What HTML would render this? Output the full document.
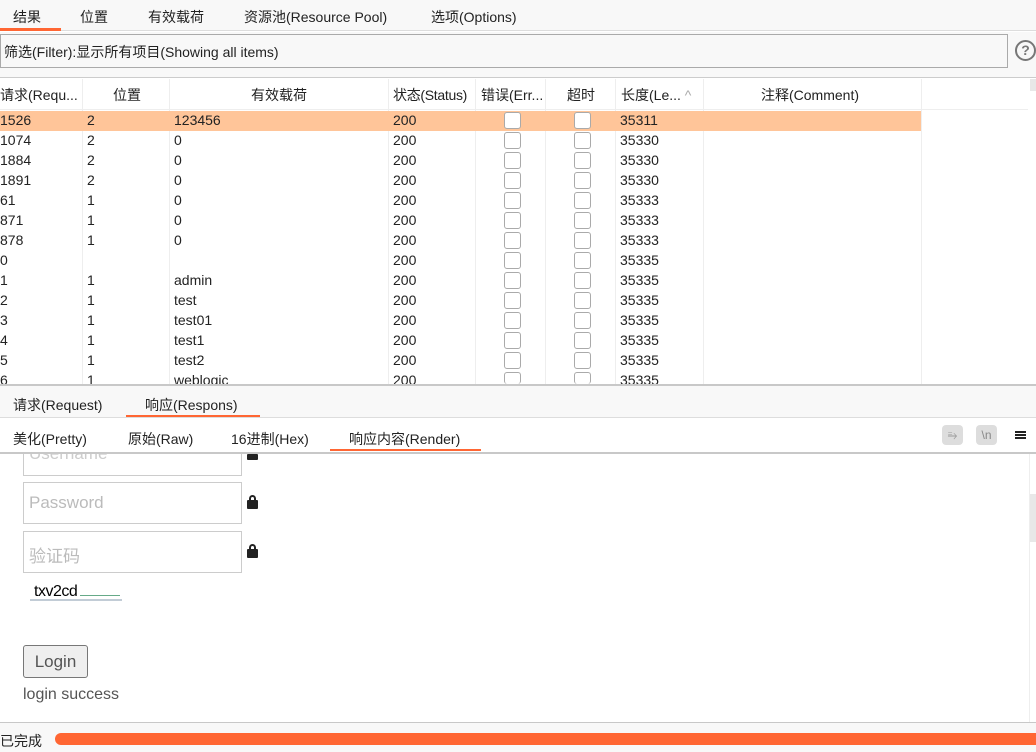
<!DOCTYPE html>
<html><head><meta charset="utf-8"><style>
*{margin:0;padding:0;box-sizing:border-box}
body{width:1036px;height:752px;overflow:hidden;background:#fff;font-family:"Liberation Sans","Noto Sans CJK SC",sans-serif;font-size:14px;color:#222;position:relative}
.a{position:absolute;white-space:nowrap}
.cb{position:absolute;width:17px;height:17px;border:1px solid #aaa;border-radius:3px;background:#fff}
.row{position:absolute;left:0;width:921px;height:20px}
.row span{position:absolute;top:1px}
.lock{position:absolute;width:11px;height:9px;background:#222;border-radius:1px}
.lock:before{content:"";position:absolute;left:2px;top:-5px;width:7px;height:7px;border:2px solid #222;border-bottom:none;border-radius:4px 4px 0 0;box-sizing:border-box}
</style></head><body>
<!-- top tabs -->
<div class="a" style="left:0;top:0;width:1036px;height:31px;background:#f8f8f8;border-bottom:1px solid #ddd"></div>
<div class="a" style="left:13px;top:7px">结果</div>
<div class="a" style="left:80px;top:7px">位置</div>
<div class="a" style="left:148px;top:7px">有效载荷</div>
<div class="a" style="left:244px;top:7px">资源池(Resource Pool)</div>
<div class="a" style="left:431px;top:7px">选项(Options)</div>
<div class="a" style="left:0;top:28px;width:61px;height:3px;background:#ff6633"></div>
<div class="a" style="left:0;top:32px;width:1036px;height:46px;background:#f8f8f8;border-bottom:1px solid #ccc"></div>
<div class="a" style="left:0;top:34px;width:1008px;height:34px;border:1px solid #aaa;background:#f8f8f8"></div>
<div class="a" style="left:4px;top:42px">筛选(Filter):显示所有项目(Showing all items)</div>
<div class="a" style="left:1015px;top:40px;width:21px;height:21px;border:2px solid #777;border-radius:50%;font-size:14px;font-weight:bold;color:#777;text-align:center;line-height:17px">?</div>
<!-- header -->
<div class="a" style="left:0;top:79px;width:1028px;height:31px;background:#fff;border-bottom:1px solid #eee"></div>
<div class="a" style="left:0;top:85px">请求(Requ...</div>
<div class="a" style="left:113px;top:85px">位置</div>
<div class="a" style="left:251px;top:85px">有效载荷</div>
<div class="a" style="left:393px;top:85px;letter-spacing:-0.3px">状态(Status)</div>
<div class="a" style="left:481px;top:85px">错误(Err...</div>
<div class="a" style="left:567px;top:85px">超时</div>
<div class="a" style="left:621px;top:85px">长度(Le... <span style="color:#aaa">^</span></div>
<div class="a" style="left:761px;top:85px">注释(Comment)</div>
<div class="a" style="left:1030px;top:79px;width:6px;height:12px;background:#e8e8e8"></div>
<!-- column lines -->
<div class="a" style="left:82px;top:79px;width:1px;height:306px;background:#eee"></div>
<div class="a" style="left:169px;top:79px;width:1px;height:306px;background:#eee"></div>
<div class="a" style="left:388px;top:79px;width:1px;height:306px;background:#eee"></div>
<div class="a" style="left:475px;top:79px;width:1px;height:306px;background:#eee"></div>
<div class="a" style="left:545px;top:79px;width:1px;height:306px;background:#eee"></div>
<div class="a" style="left:615px;top:79px;width:1px;height:306px;background:#eee"></div>
<div class="a" style="left:703px;top:79px;width:1px;height:306px;background:#eee"></div>
<div class="a" style="left:921px;top:79px;width:1px;height:306px;background:#eee"></div>
<div class="row" style="top:111px;background:#ffc599"><span style="left:0">1526</span><span style="left:87px">2</span><span style="left:174px">123456</span><span style="left:393px">200</span><span style="left:620px">35311</span></div>
<div class="row" style="top:131px"><span style="left:0">1074</span><span style="left:87px">2</span><span style="left:174px">0</span><span style="left:393px">200</span><span style="left:620px">35330</span></div>
<div class="row" style="top:151px"><span style="left:0">1884</span><span style="left:87px">2</span><span style="left:174px">0</span><span style="left:393px">200</span><span style="left:620px">35330</span></div>
<div class="row" style="top:171px"><span style="left:0">1891</span><span style="left:87px">2</span><span style="left:174px">0</span><span style="left:393px">200</span><span style="left:620px">35330</span></div>
<div class="row" style="top:191px"><span style="left:0">61</span><span style="left:87px">1</span><span style="left:174px">0</span><span style="left:393px">200</span><span style="left:620px">35333</span></div>
<div class="row" style="top:211px"><span style="left:0">871</span><span style="left:87px">1</span><span style="left:174px">0</span><span style="left:393px">200</span><span style="left:620px">35333</span></div>
<div class="row" style="top:231px"><span style="left:0">878</span><span style="left:87px">1</span><span style="left:174px">0</span><span style="left:393px">200</span><span style="left:620px">35333</span></div>
<div class="row" style="top:251px"><span style="left:0">0</span><span style="left:393px">200</span><span style="left:620px">35335</span></div>
<div class="row" style="top:271px"><span style="left:0">1</span><span style="left:87px">1</span><span style="left:174px">admin</span><span style="left:393px">200</span><span style="left:620px">35335</span></div>
<div class="row" style="top:291px"><span style="left:0">2</span><span style="left:87px">1</span><span style="left:174px">test</span><span style="left:393px">200</span><span style="left:620px">35335</span></div>
<div class="row" style="top:311px"><span style="left:0">3</span><span style="left:87px">1</span><span style="left:174px">test01</span><span style="left:393px">200</span><span style="left:620px">35335</span></div>
<div class="row" style="top:331px"><span style="left:0">4</span><span style="left:87px">1</span><span style="left:174px">test1</span><span style="left:393px">200</span><span style="left:620px">35335</span></div>
<div class="row" style="top:351px"><span style="left:0">5</span><span style="left:87px">1</span><span style="left:174px">test2</span><span style="left:393px">200</span><span style="left:620px">35335</span></div>
<div class="row" style="top:371px;height:13px;overflow:hidden"><span style="left:0">6</span><span style="left:87px">1</span><span style="left:174px">weblogic</span><span style="left:393px">200</span><span style="left:620px">35335</span></div>
<div class="cb" style="left:504px;top:112px"></div><div class="cb" style="left:574px;top:112px"></div>
<div class="cb" style="left:504px;top:132px"></div><div class="cb" style="left:574px;top:132px"></div>
<div class="cb" style="left:504px;top:152px"></div><div class="cb" style="left:574px;top:152px"></div>
<div class="cb" style="left:504px;top:172px"></div><div class="cb" style="left:574px;top:172px"></div>
<div class="cb" style="left:504px;top:192px"></div><div class="cb" style="left:574px;top:192px"></div>
<div class="cb" style="left:504px;top:212px"></div><div class="cb" style="left:574px;top:212px"></div>
<div class="cb" style="left:504px;top:232px"></div><div class="cb" style="left:574px;top:232px"></div>
<div class="cb" style="left:504px;top:252px"></div><div class="cb" style="left:574px;top:252px"></div>
<div class="cb" style="left:504px;top:272px"></div><div class="cb" style="left:574px;top:272px"></div>
<div class="cb" style="left:504px;top:292px"></div><div class="cb" style="left:574px;top:292px"></div>
<div class="cb" style="left:504px;top:312px"></div><div class="cb" style="left:574px;top:312px"></div>
<div class="cb" style="left:504px;top:332px"></div><div class="cb" style="left:574px;top:332px"></div>
<div class="cb" style="left:504px;top:352px"></div><div class="cb" style="left:574px;top:352px"></div>
<div class="cb" style="left:504px;top:372px;height:12px;border-bottom:none"></div><div class="cb" style="left:574px;top:372px;height:12px;border-bottom:none"></div>
<!-- lower tabs -->
<div class="a" style="left:0;top:384px;width:1036px;height:2px;background:#c8c8c8"></div>
<div class="a" style="left:0;top:386px;width:1036px;height:32px;background:#f8f8f8;border-bottom:1px solid #ddd"></div>
<div class="a" style="left:13px;top:395px">请求(Request)</div>
<div class="a" style="left:145px;top:395px">响应(Respons)</div>
<div class="a" style="left:126px;top:415px;width:134px;height:2px;background:#ff6633"></div>
<div class="a" style="left:13px;top:429px">美化(Pretty)</div>
<div class="a" style="left:128px;top:429px">原始(Raw)</div>
<div class="a" style="left:231px;top:429px">16进制(Hex)</div>
<div class="a" style="left:349px;top:429px">响应内容(Render)</div>
<div class="a" style="left:330px;top:449px;width:151px;height:2px;background:#ff6633"></div>
<div class="a" style="left:942px;top:425px;width:21px;height:20px;background:#ddd;border-radius:4px;color:#999;font-size:12px;text-align:center;line-height:20px">⥱</div>
<div class="a" style="left:976px;top:425px;width:21px;height:20px;background:#ddd;border-radius:4px;color:#888;font-size:12px;text-align:center;line-height:20px">\n</div>
<div class="a" style="left:1015px;top:431px;width:11px;height:2px;background:#222;box-shadow:0 3px 0 #222,0 6px 0 #222"></div>
<div class="a" style="left:0;top:452px;width:1036px;height:2px;background:#c8c8c8"></div>
<!-- render -->
<div class="a" style="left:0;top:454px;width:1036px;height:268px;overflow:hidden">
  <div class="a" style="left:1029px;top:0;width:1px;height:268px;background:#eee"></div>
  <div class="a" style="left:1030px;top:40px;width:6px;height:48px;background:#e8e8e8"></div>
  <div class="a" style="left:23px;top:-14px;width:219px;height:36px;border:1px solid #ccc"></div>
  <div class="a" style="left:29px;top:-10px;font-size:17px;color:#ccc">Username</div>
  <div class="a" style="left:23px;top:28px;width:219px;height:42px;border:1px solid #ccc"></div>
  <div class="a" style="left:29px;top:39px;font-size:17px;color:#bbb">Password</div>
  <div class="a" style="left:23px;top:77px;width:219px;height:42px;border:1px solid #ccc"></div>
  <div class="a" style="left:29px;top:88px;font-size:17px;color:#bbb">验证码</div>
  <div class="lock" style="left:247px;top:0px;height:6px"></div>
  <div class="lock" style="left:247px;top:46px"></div>
  <div class="lock" style="left:247px;top:95px"></div>
  <div class="a" style="left:34px;top:129px;font-size:16px;color:#000;letter-spacing:-0.5px">txv2cd</div>
  <div class="a" style="left:30px;top:145px;width:92px;height:2px;background:#9ab;opacity:.6"></div>
  <div class="a" style="left:80px;top:141px;width:40px;height:1px;background:#6a8"></div>
  <div class="a" style="left:23px;top:191px;width:65px;height:33px;border:1px solid #777;border-radius:3px;background:#efefef;font-size:17px;color:#555;text-align:center;line-height:31px">Login</div>
  <div class="a" style="left:23px;top:232px;font-size:16px;color:#555">login success</div>
</div>
<!-- status -->
<div class="a" style="left:0;top:722px;width:1036px;height:30px;background:#f8f8f8;border-top:1px solid #c8c8c8"></div>
<div class="a" style="left:0;top:731px">已完成</div>
<div class="a" style="left:55px;top:733px;width:990px;height:12px;background:#ff6633;border-radius:6px"></div>
</body></html>
